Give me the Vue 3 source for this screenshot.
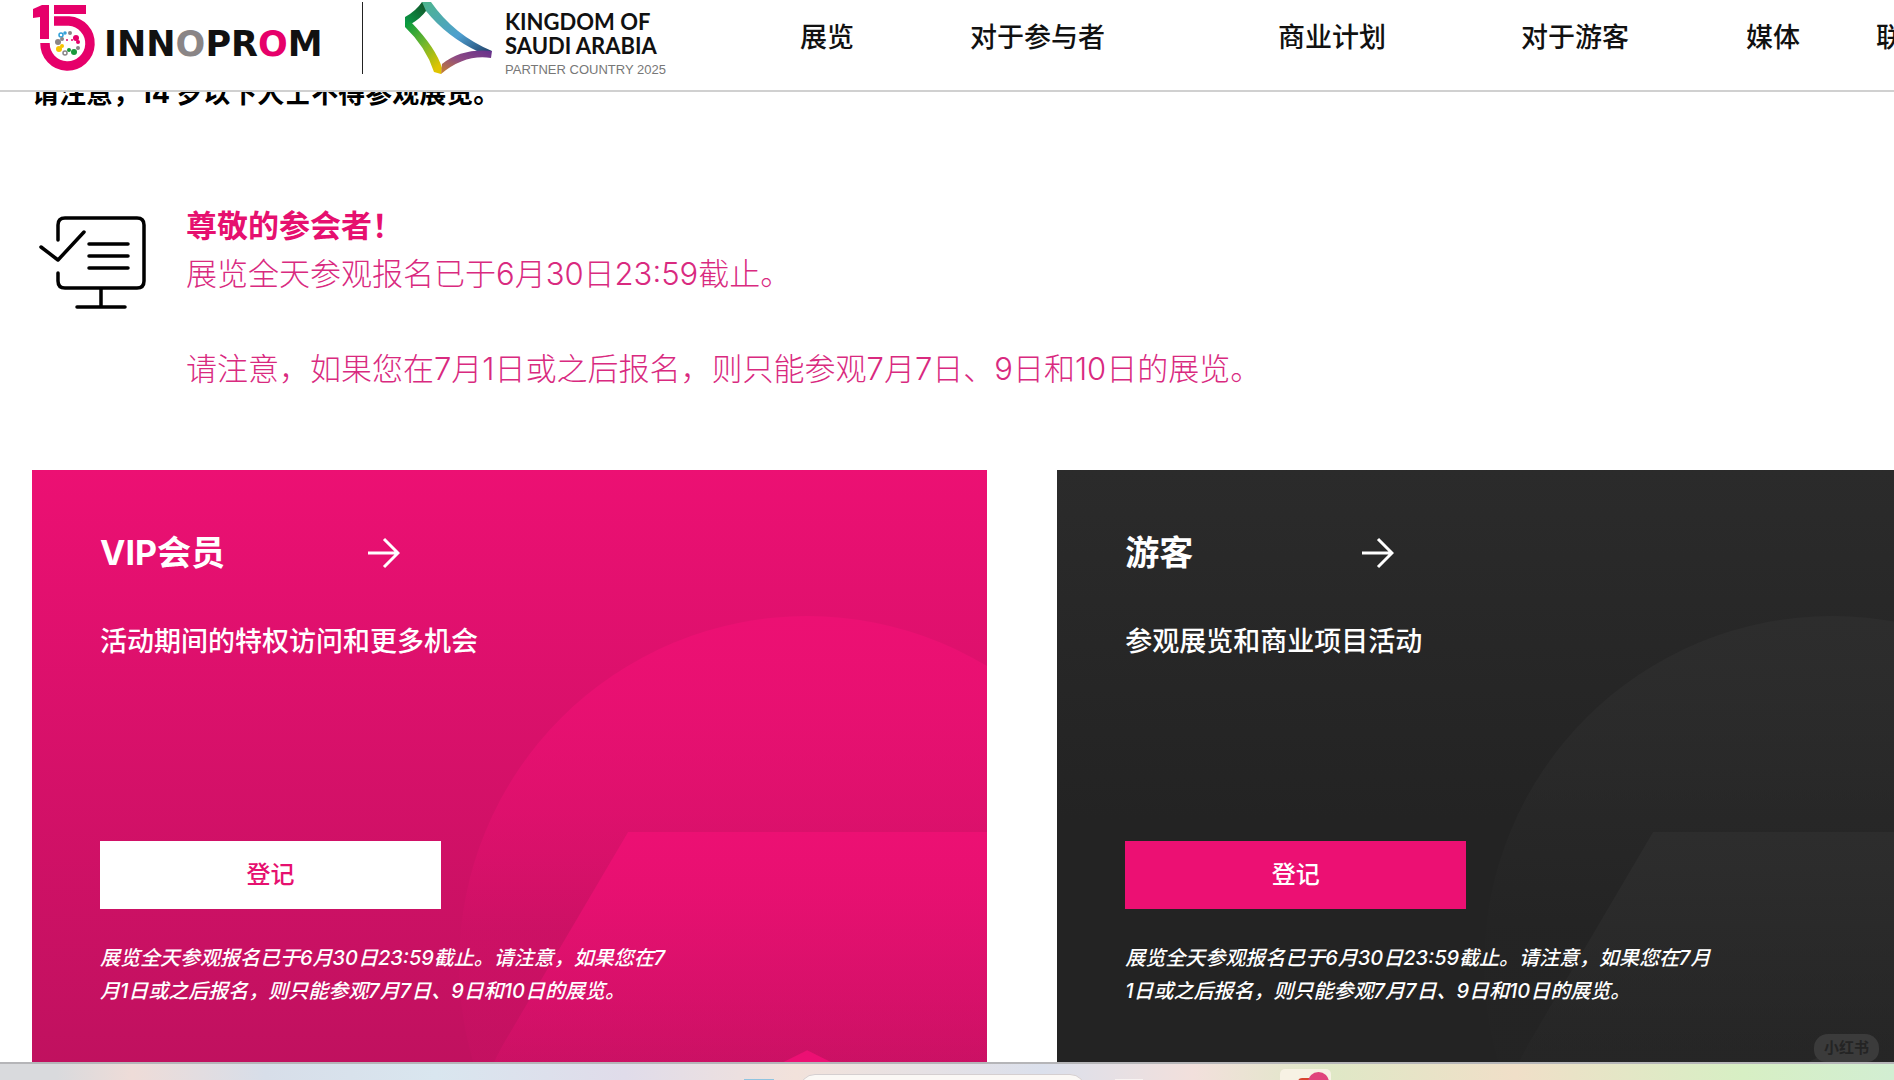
<template>
  <div class="page">
    <header class="header">
      <a href="#" class="brand" aria-label="INNOPROM">
        <svg class="brand-mark" viewBox="0 0 64 70" aria-hidden="true">
          <g fill="#e6006a">
            <path d="M0 7 L9 3 H16 V37 H7 V15 L0 16 Z" />
            <rect x="21" y="3" width="32" height="9" />
          </g>
          <path d="M21 19 H36 A22.500 22.500 0 1 1 12 41" fill="none" stroke="#e6006a" stroke-width="9.500" />
          <g stroke-width="1.500">
            <circle v-for="d in dots" :key="d.x + '-' + d.y" :cx="d.x" :cy="d.y" :r="d.r" :fill="d.fill" :stroke="d.stroke" />
          </g>
        </svg>
        <span class="brand-name">INN<span class="grey">O</span>PR<span class="pink">O</span>M</span>
      </a>
      <div class="divider"></div>
      <div class="partner">
        <svg class="partner-mark" viewBox="0 0 90 74" aria-hidden="true">
          <defs>
            <linearGradient id="g1" x1="0" y1="1" x2="1" y2="0">
              <stop offset="0" stop-color="#0aa34a" /><stop offset="1" stop-color="#124a26" />
            </linearGradient>
            <linearGradient id="g2" x1="0" y1="0" x2="1" y2="1">
              <stop offset="0" stop-color="#4db58c" /><stop offset="0.600" stop-color="#4e9fd0" /><stop offset="1" stop-color="#203f66" />
            </linearGradient>
            <linearGradient id="g3" x1="0" y1="0" x2="0.700" y2="1">
              <stop offset="0" stop-color="#00983f" /><stop offset="0.500" stop-color="#6cb52e" /><stop offset="1" stop-color="#dfc400" />
            </linearGradient>
            <linearGradient id="g4" x1="0" y1="1" x2="1" y2="0">
              <stop offset="0" stop-color="#c8842c" /><stop offset="0.500" stop-color="#8e4a84" /><stop offset="1" stop-color="#64308c" />
            </linearGradient>
          </defs>
          <path d="M1 17 Q12 11 18 2 L25 2 L22 11 Q17 18 7 24 L1 27 Z" fill="url(#g1)" />
          <path d="M1 23 L7 22 Q32 48 38 68 L37 74 L30 72 Q22 47 1 27 Z" fill="url(#g3)" />
          <path d="M18 2 H27 Q50 35 88 51 L75 52 Q43 37 22 11 Z" fill="url(#g2)" />
          <path d="M37 74 L38 64 Q58 48 88 51 L87 58 Q61 54 37 74 Z" fill="url(#g4)" />
        </svg>
        <div class="partner-text">
          <div class="partner-name">KINGDOM OF<br />SAUDI ARABIA</div>
          <div class="partner-sub">PARTNER COUNTRY 2025</div>
        </div>
      </div>
      <nav class="nav">
        <a v-for="item in menu" :key="item" href="#">{{ item }}</a>
      </nav>
    </header>

    <main class="content">
      <p class="age-note">请注意，14 岁以下人士不得参观展览。</p>

      <section class="notice">
        <svg class="notice-icon" viewBox="0 0 108 94" aria-hidden="true">
          <path d="M19 24 V9 Q19 2 26 2 H98 Q105 2 105 9 V65 Q105 72 98 72 H26 Q19 72 19 65 V57 M2 31 L19 44 L45 16 M50 28 H89 M50 40 H89 M50 52 H89 M62 72 V91 M38 91 H86" />
        </svg>
        <div class="notice-text">
          <strong>尊敬的参会者！</strong>
          <p>展览全天参观报名已于6月30日23:59截止。</p>
          <p class="spaced">请注意，如果您在7月1日或之后报名，则只能参观7月7日、9日和10日的展览。</p>
        </div>
      </section>

      <section class="cards">
        <article v-for="card in cards" :key="card.kind" class="card" :class="card.kind">
          <svg class="card-bg" viewBox="0 0 955 700" preserveAspectRatio="xMaxYMin slice" aria-hidden="true">
            <defs>
              <linearGradient :id="'c-' + card.kind" x1="0" y1="0" x2="0" y2="1">
                <stop offset="0" :stop-color="card.tone" />
                <stop offset="0.450" :stop-color="card.tone" stop-opacity="0.080" />
              </linearGradient>
              <linearGradient :id="'p-' + card.kind" x1="0" y1="0" x2="0" y2="1">
                <stop offset="0" :stop-color="card.tone" />
                <stop offset="0.750" :stop-color="card.tone" stop-opacity="0.100" />
              </linearGradient>
            </defs>
            <circle cx="775" cy="494" r="348" :fill="`url(#c-${card.kind})`" />
            <path d="M596 362 H955 V700 H426 Q436 640 470 576 Z" :fill="`url(#p-${card.kind})`" />
            <path d="M775 580 L955 670 V700 H595 V670 Z" :fill="card.tone" />
          </svg>
          <div class="card-body">
            <div class="card-head">
              <h2>{{ card.title }}</h2>
              <svg class="arrow" viewBox="0 0 32 32" aria-hidden="true">
                <path d="M0 16 H30 M16 2 L30 16 L16 30" />
              </svg>
            </div>
            <p class="card-desc">{{ card.desc }}</p>
            <button type="button">登记</button>
            <p class="card-note">{{ card.note }}</p>
          </div>
        </article>
      </section>

      <div class="watermark">小红书</div>
    </main>

    <footer class="taskbar">
      <span class="task-widget"></span>
      <input class="task-search" type="text" aria-label="搜索" />
      <span class="task-view"></span>
      <span class="task-app"><span class="task-badge"></span></span>
    </footer>
  </div>
</template>

<script setup>
const menu = ['展览', '对于参与者', '商业计划', '对于游客', '媒体', '联']

const cards = [
  {
    kind: 'vip',
    title: 'VIP会员',
    desc: '活动期间的特权访问和更多机会',
    tone: '#ec1073',
    note: '展览全天参观报名已于6月30日23:59截止。请注意，如果您在7\n月1日或之后报名，则只能参观7月7日、9日和10日的展览。',
  },
  {
    kind: 'visitor',
    title: '游客',
    desc: '参观展览和商业项目活动',
    tone: '#2d2d2d',
    note: '展览全天参观报名已于6月30日23:59截止。请注意，如果您在7月\n1日或之后报名，则只能参观7月7日、9日和10日的展览。',
  },
]

// small coloured ring inside the anniversary mark
const dots = [
  { x: 28, y: 33, r: 2, fill: '#fff', stroke: '#2f9fd8' },
  { x: 32, y: 31, r: 1, fill: '#fff', stroke: '#2f9fd8' },
  { x: 37, y: 31, r: 2, fill: '#8a8586', stroke: 'none' },
  { x: 43, y: 36, r: 3, fill: '#e6006a', stroke: 'none' },
  { x: 45, y: 40, r: 2, fill: '#e6006a', stroke: 'none' },
  { x: 25, y: 40, r: 3, fill: '#8a8586', stroke: 'none' },
  { x: 29, y: 37, r: 2, fill: '#8a8586', stroke: 'none' },
  { x: 26, y: 47, r: 3, fill: '#f6c400', stroke: 'none' },
  { x: 29, y: 44, r: 2, fill: '#f6c400', stroke: 'none' },
  { x: 32, y: 51, r: 2, fill: '#fff', stroke: '#8a8586' },
  { x: 36, y: 48, r: 2, fill: '#1a9a3c', stroke: 'none' },
  { x: 41, y: 50, r: 3, fill: '#1a9a3c', stroke: 'none' },
  { x: 45, y: 46, r: 2, fill: '#8a8586', stroke: 'none' },
  { x: 39, y: 38, r: 1, fill: '#e6006a', stroke: 'none' },
  { x: 34, y: 38, r: 1, fill: '#e6006a', stroke: 'none' },
]
</script>

<style>
body {
  margin: 0;
  overflow: hidden;
}
</style>

<style scoped>
.page {
  display: flex;
  flex-direction: column;
  height: 100vh;
  overflow: hidden;
  background: #fff;
  color: #111;
  font-family: Inter, "Noto Sans CJK SC", sans-serif;
}

p,
h2 {
  margin: 0;
}

a {
  color: inherit;
  text-decoration: none;
}

.header {
  display: flex;
  align-items: flex-start;
  height: 90px;
  flex-shrink: 0;
  padding-left: 33px;
  border-bottom: 2px solid #d0d0d0;
  white-space: nowrap;
}

.header > * {
  flex-shrink: 0;
}

.brand {
  display: flex;
  gap: 7px;
  padding-top: 2px;
}

.brand-mark {
  width: 64px;
  height: 70px;
}

.brand-name {
  width: 221px;
  padding-top: 20px;
  font-family: "DejaVu Sans", sans-serif;
  font-size: 35px;
  line-height: 44px;
  font-weight: 700;
}

.grey { color: #8a8586; }
.pink { color: #e6006a; }

.divider {
  width: 1px;
  height: 72px;
  margin: 2px 0 0 37px;
  background: #222;
}

.partner {
  display: flex;
  gap: 11px;
  width: 396px;
  margin-left: 41px;
}

.partner-mark {
  width: 90px;
  height: 74px;
}

.partner-name {
  padding-top: 10px;
  font-family: Lato, sans-serif;
  font-size: 22px;
  line-height: 24px;
  font-weight: 700;
}

.partner-sub {
  padding-top: 4px;
  font-family: "Liberation Sans", sans-serif;
  font-size: 13px;
  line-height: 16px;
  color: #777;
}

.nav {
  display: grid;
  grid-template-columns: 170px 308px 243px 225px 130px auto;
  padding-top: 18px;
  font-size: 27px;
  line-height: 40px;
  font-weight: 500;
}

.content {
  position: relative;
  flex: 1;
  min-height: 0;
  padding: 0 32px;
  overflow: hidden;
}

.age-note {
  margin-top: -18px;
  font-size: 27px;
  line-height: 40px;
  font-weight: 700;
  color: #000;
}

.notice {
  display: flex;
  gap: 39px;
  margin-top: 88px;
  padding-left: 7px;
}

.notice-icon {
  width: 108px;
  height: 94px;
  margin-top: 14px;
  fill: none;
  stroke: #000;
  stroke-width: 3.5;
  stroke-linecap: round;
  stroke-linejoin: round;
}

.notice-text {
  font-size: 31px;
  line-height: 48px;
  font-weight: 300;
  color: #d92a7f;
}

.notice-text strong {
  font-weight: 700;
  color: #e6106f;
}

.spaced {
  margin-top: 47px;
}

.cards {
  display: grid;
  grid-template-columns: repeat(2, 52.2%);
  gap: 70px;
  margin-top: 77px;
}

.card {
  position: relative;
  height: 700px;
  color: #fff;
}

.vip { background: linear-gradient(#ec1073, #c0115f 592px); }
.visitor { background: linear-gradient(#2b2b2b, #232323 350px); }

.card-bg {
  position: absolute;
  inset: 0;
  width: 100%;
  height: 100%;
}

.card-body {
  position: relative;
  padding: 58px 68px;
}

.card-head {
  display: flex;
  align-items: center;
}

.card-head h2 {
  width: 268px;
  font-size: 34px;
  line-height: 50px;
  font-weight: 700;
}

.visitor h2 {
  width: 237px;
}

.arrow {
  width: 32px;
  height: 32px;
  fill: none;
  stroke: #fff;
  stroke-width: 3;
}

.card-desc {
  margin-top: 44px;
  font-size: 27px;
  line-height: 40px;
  font-weight: 500;
}

button {
  display: block;
  width: 341px;
  height: 68px;
  margin-top: 179px;
  padding: 0 0 6px;
  border: 0;
  background: #fff;
  color: #e6106f;
  font-family: inherit;
  font-size: 24px;
  font-weight: 500;
}

.visitor button {
  background: #ec1073;
  color: #fff;
}

.card-note {
  margin-top: 33px;
  font-size: 20px;
  line-height: 33px;
  font-weight: 500;
  font-style: italic;
  white-space: pre;
}

.watermark {
  position: absolute;
  right: 15px;
  bottom: 0;
  width: 65px;
  border-radius: 14px 14px 12px 12px;
  background: #3b3b3b;
  color: #242424;
  font-size: 15px;
  line-height: 28px;
  font-weight: 700;
  text-align: center;
}

.taskbar {
  display: flex;
  align-items: flex-start;
  height: 16px;
  flex-shrink: 0;
  padding-left: 744px;
  border-top: 2px solid #b5b5b8;
  overflow: hidden;
  background: linear-gradient(90deg, #d9dadd 0%, #d9dadd 3%, #eedcd8 7%, #d7dee9 14%, #d9e6ef 23%, #e0dcea 33%, #f2e2db 42%, #dbe0ec 55%, #f2e0dc 63%, #dfe8c6 70%, #f0dfc8 80%, #d7efc4 92%, #d2eed2 100%);
}

.taskbar > * {
  flex-shrink: 0;
}

.task-widget {
  width: 30px;
  height: 10px;
  margin: 15px 25px 0 0;
  background: #8fc4e0;
}

.task-search {
  box-sizing: border-box;
  width: 287px;
  height: 32px;
  margin-top: 10px;
  border: 1px solid #d5cfd0;
  border-radius: 16px;
  background: #fbf8f5;
}

.task-view {
  width: 28px;
  height: 10px;
  margin: 15px 137px 0 29px;
  background: #f8f3f2;
}

.task-app {
  position: relative;
  width: 51px;
  height: 40px;
  margin-top: 5px;
  border-radius: 5px;
  background: #f7f2e4;
}

.task-app::before {
  content: "";
  position: absolute;
  top: 9px;
  left: 18px;
  width: 20px;
  height: 12px;
  border-radius: 4px;
  background: #d8432f;
}

.task-badge {
  position: absolute;
  top: 3px;
  right: 2px;
  width: 21px;
  height: 21px;
  border-radius: 50%;
  background: #e0447c;
}
</style>
